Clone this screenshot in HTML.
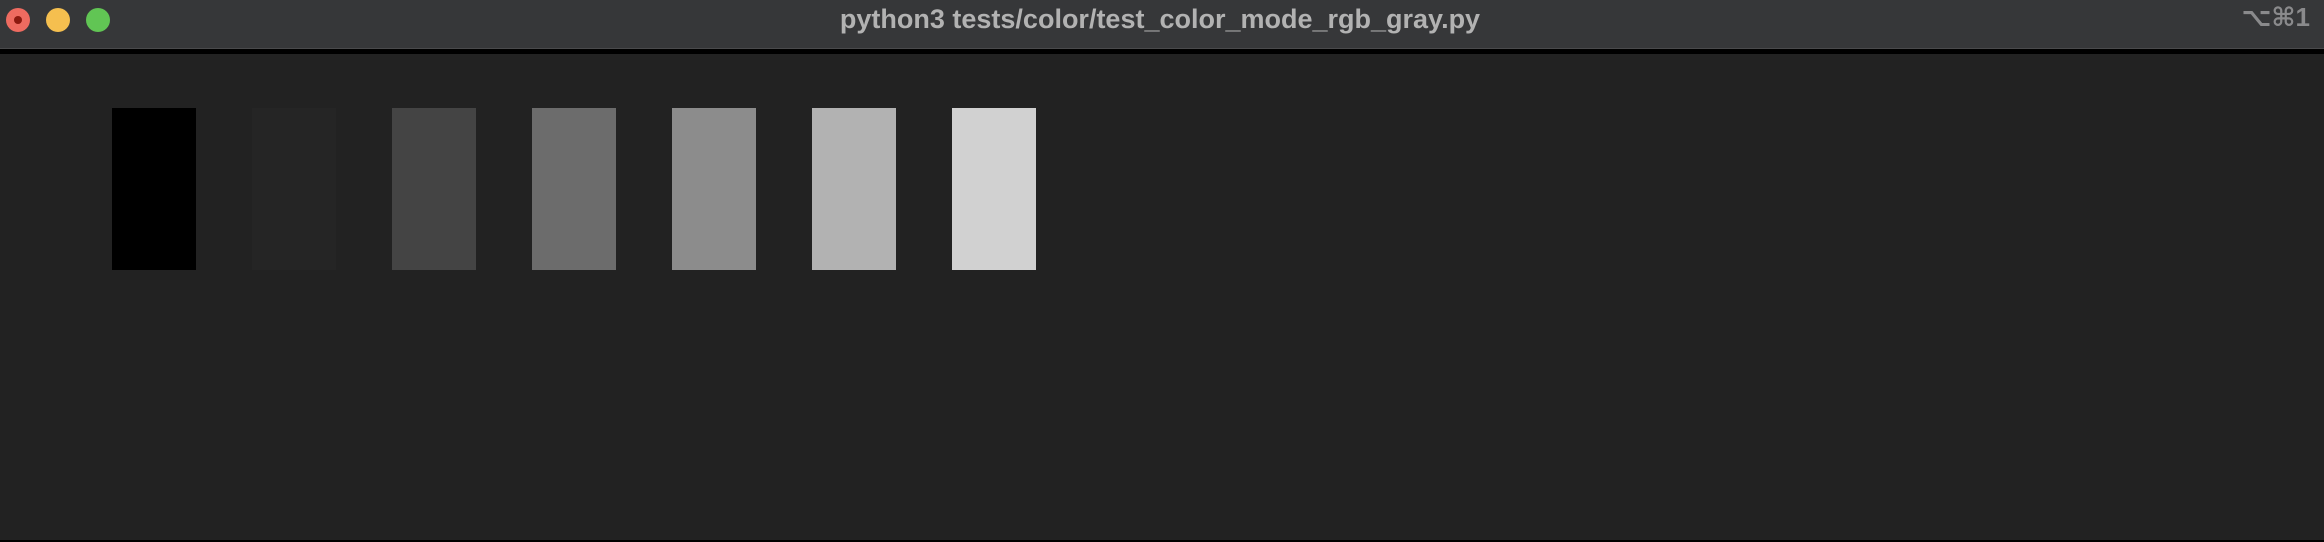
<!DOCTYPE html>
<html><head><style>
html,body{margin:0;padding:0;width:2324px;height:542px;overflow:hidden;background:#222222;}
.bar{position:absolute;left:0;top:0;width:2324px;height:48px;background:#363739;}
.line{position:absolute;left:0;top:48px;width:2324px;height:6px;background:#000;border-top:1px solid #4a4a4c;box-sizing:border-box;}
.c{position:absolute;top:8px;width:24px;height:24px;border-radius:50%;}
.title{position:absolute;left:835px;top:4px;width:650px;text-align:center;font:bold 27px "Liberation Sans",sans-serif;color:#b2b2b2;letter-spacing:0px;white-space:nowrap;}
.sc{position:absolute;right:14px;top:2px;font:bold 26px "Liberation Sans","DejaVu Sans",sans-serif;color:#8a8a8c;}
.r{position:absolute;top:108px;width:84px;height:162px;}
.bot{position:absolute;left:0;top:540px;width:2324px;height:2px;background:#000;}
</style></head><body>
<div class="bar"></div>
<div class="line"></div>
<div class="c" style="left:6px;background:#ee6b60;"><div style="position:absolute;left:8px;top:8px;width:8px;height:8px;border-radius:50%;background:#8c1a10"></div></div>
<div class="c" style="left:46px;background:#f5bf4f;"></div>
<div class="c" style="left:86px;background:#61c554;"></div>
<div class="title">python3 tests/color/test_color_mode_rgb_gray.py</div>
<div class="sc">⌥⌘1</div>
<div class="r" style="left:112px;background:#000"></div>
<div class="r" style="left:252px;background:#252525"></div>
<div class="r" style="left:392px;background:#444444"></div>
<div class="r" style="left:532px;background:#6c6c6c"></div>
<div class="r" style="left:672px;background:#8c8c8c"></div>
<div class="r" style="left:812px;background:#b2b2b2"></div>
<div class="r" style="left:952px;background:#d1d1d1"></div>
<div class="bot"></div>
</body></html>
